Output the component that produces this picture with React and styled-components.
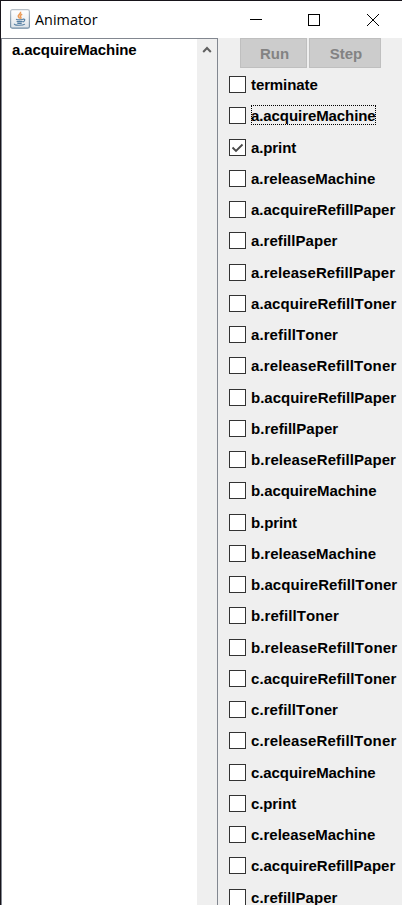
import React from "react";
import styled, { createGlobalStyle } from "styled-components";

const GlobalStyle = createGlobalStyle`
  * { box-sizing: border-box; }
  html, body { margin: 0; height: 100%; overflow: hidden; }
`;

const Window = styled.div`
  width: 402px;
  height: 905px;
  overflow: hidden;
  display: flex;
  flex-direction: column;
  background: #efefef;
  color: #000;
  border-top: 1px solid #17141a;
  border-left: 1px solid #17141a;
  font-family: "Liberation Sans", Arial, sans-serif;
  font-kerning: none;
`;

const TitleBar = styled.header`
  flex: none;
  height: 37px;
  display: flex;
  align-items: center;
  padding-left: 9px;
  background: #fff;
`;

const JavaIcon = styled.svg`
  flex: none;
  width: 20px;
  height: 20px;
  margin-top: -1px;
`;

const Title = styled.h1`
  flex: 1;
  margin: 0 0 0 5px;
  font: 400 14.4px/20px "Open Sans", sans-serif;
`;

const WindowControls = styled.div`
  display: flex;
  gap: 40px;
  padding-right: 19px;
`;

const ControlIcon = styled.svg`
  width: 19px;
  height: 19px;
  margin-top: -1px;
  fill: none;
  stroke: #000;
`;

const Body = styled.div`
  flex: 1;
  min-height: 0;
  display: flex;
`;

const TracePane = styled.section`
  flex: none;
  width: 217px;
  display: flex;
  background: #fff;
  border: 1px solid #828790;
  border-bottom: 0;
`;

const TraceText = styled.div`
  flex: 1;
  padding: 2px 0 0 10px;
  font-size: 15px;
  line-height: 17px;
  font-weight: 700;
  letter-spacing: -0.08px;
`;

const ScrollTrack = styled.div`
  width: 20px;
  background: #efefef;
`;

const ScrollArrow = styled.svg`
  display: block;
  width: 20px;
  height: 20px;
`;

const ActionPane = styled.section`
  flex: 1;
  min-width: 0;
`;

const ButtonBar = styled.div`
  display: flex;
  gap: 2px;
  height: 31px;
  padding-left: 22px;
`;

const PushButton = styled.button`
  width: ${(p) => p.$width}px;
  height: 30px;
  padding: 1px 0 0 2px;
  border: 1px solid #bfbfbf;
  border-radius: 0;
  background: #ccc;
  color: #838383;
  font: 700 15px/17px "Liberation Sans", Arial, sans-serif;
`;

const ActionList = styled.div`
  display: flex;
  flex-direction: column;
  padding-left: 11px;
`;

const ActionRow = styled.label`
  flex: none;
  height: 31.25px;
  display: flex;
  align-items: flex-start;
  padding-top: 7px;
`;

const Box = styled.span`
  flex: none;
  display: block;
  width: 17px;
  height: 17px;
  border: 1px solid #333;
  background: #fff;
`;

const CheckMark = styled.svg`
  display: block;
  width: 15px;
  height: 15px;
  fill: none;
  stroke: #484848;
  stroke-width: 1.8;
`;

const ActionName = styled.span`
  height: 20px;
  width: ${(p) => (p.$focused ? "125px" : "auto")};
  margin: -2px 0 0 5px;
  padding-top: 1px;
  border: 1px dotted ${(p) => (p.$focused ? "#000" : "transparent")};
  text-indent: -1px;
  font-size: 15px;
  line-height: 17px;
  font-weight: 700;
  letter-spacing: ${(p) => p.$tracking}px;
  white-space: nowrap;
`;

const TRACKING = {
  terminate: -0.1,
  print: -0.1,
  acquireMachine: -0.08,
  refillPaper: 0.04,
  releaseRefillPaper: 0.08,
  acquireRefillToner: 0.06,
  refillToner: 0.09,
  releaseRefillToner: 0.14,
};

const trackingOf = (name) => TRACKING[name.split(".").pop()] ?? 0;

const ACTIONS = [
  "terminate",
  "a.acquireMachine", "a.print", "a.releaseMachine",
  "a.acquireRefillPaper", "a.refillPaper", "a.releaseRefillPaper",
  "a.acquireRefillToner", "a.refillToner", "a.releaseRefillToner",
  "b.acquireRefillPaper", "b.refillPaper", "b.releaseRefillPaper",
  "b.acquireMachine", "b.print", "b.releaseMachine",
  "b.acquireRefillToner", "b.refillToner", "b.releaseRefillToner",
  "c.acquireRefillToner", "c.refillToner", "c.releaseRefillToner",
  "c.acquireMachine", "c.print", "c.releaseMachine",
  "c.acquireRefillPaper", "c.refillPaper",
];

function CoffeeCup() {
  return (
    <JavaIcon viewBox="0 0 20 20" fill="none">
      <defs>
        <linearGradient id="tile" x1="0" y1="0" x2="0" y2="1">
          <stop offset="0" stopColor="#fff" />
          <stop offset="0.5" stopColor="#f1f3f5" />
          <stop offset="1" stopColor="#dbe2e8" />
        </linearGradient>
        <linearGradient id="edge" x1="0" y1="0" x2="0" y2="1">
          <stop offset="0" stopColor="#b8c0c8" />
          <stop offset="1" stopColor="#6f8ba3" />
        </linearGradient>
      </defs>
      <rect x="0.6" y="0.6" width="18.8" height="18.6" rx="1.8" fill="url(#tile)" stroke="url(#edge)" strokeWidth="1.2" />
      <path d="M10.5 2.8c1 2.2-3.2 2.8-2.2 4.8.3.8 1 1.3 1.4 1.9M12.2 5.3c-2.7 1.2-2 2-1.3 3 .3.6 0 1.1-.5 1.5" stroke="#ec9b57" strokeWidth="1.5" />
      <path d="M6 10.3c2 .8 5 .7 7-.1M6.6 12.2c1.8.6 4.2.6 5.8 0M7.2 14c1.5.6 3.2.6 4.600 0M13 10.2c2.500-.7 2.300 1.900-.3 2.900M4.500 14.800c-1.200 1.900 8.400 1.900 10.400.3" stroke="#557fa3" strokeWidth="1.2" />
    </JavaIcon>
  );
}

export default function App() {
  return (
    <>
      <GlobalStyle />
      <Window>
        <TitleBar>
          <CoffeeCup />
          <Title>Animator</Title>
          <WindowControls>
            <ControlIcon viewBox="0 0 19 19"><path d="M4 9.5h12" /></ControlIcon>
            <ControlIcon viewBox="0 0 19 19"><rect x="3.5" y="4.5" width="11" height="11" /></ControlIcon>
            <ControlIcon viewBox="0 0 19 19"><path d="M3 4l12 12M15 4L3 16" /></ControlIcon>
          </WindowControls>
        </TitleBar>
        <Body>
          <TracePane>
            <TraceText>a.acquireMachine</TraceText>
            <ScrollTrack>
              <ScrollArrow viewBox="0 0 20 20">
                <path d="M6.200 13l3.800-4 3.800 4" fill="none" stroke="#606060" strokeWidth="2" />
              </ScrollArrow>
            </ScrollTrack>
          </TracePane>
          <ActionPane>
            <ButtonBar>
              <PushButton $width={67} disabled>Run</PushButton>
              <PushButton $width={72} disabled>Step</PushButton>
            </ButtonBar>
            <ActionList>
              {ACTIONS.map((name) => (
                <ActionRow key={name}>
                  <Box>
                    {name === "a.print" && (
                      <CheckMark viewBox="0 0 15 15"><path d="M2.5 7.5l3.500 3.500 6.500-6.500" /></CheckMark>
                    )}
                  </Box>
                  <ActionName $focused={name === "a.acquireMachine"} $tracking={trackingOf(name)}>{name}</ActionName>
                </ActionRow>
              ))}
            </ActionList>
          </ActionPane>
        </Body>
      </Window>
    </>
  );
}
